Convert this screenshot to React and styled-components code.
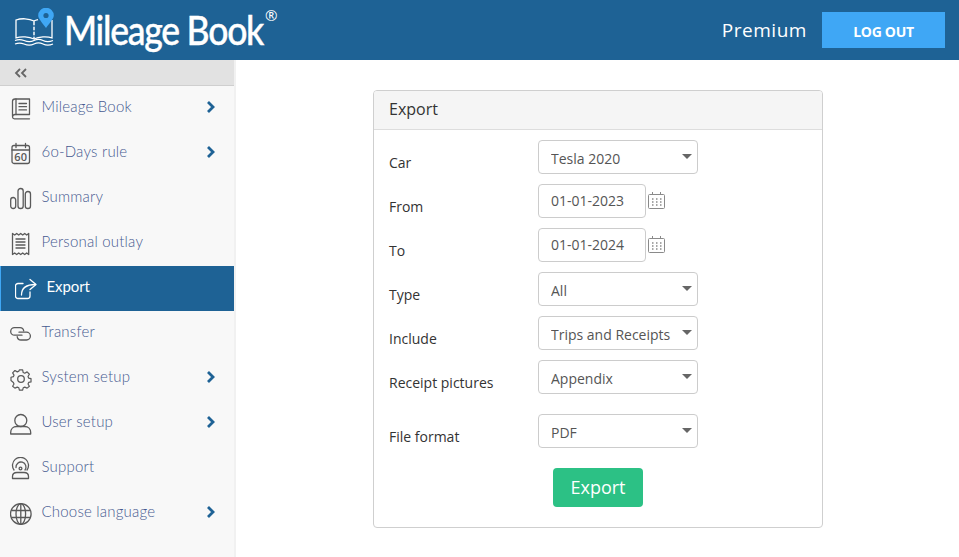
import React from "react";
import styled, { createGlobalStyle } from "styled-components";

const GlobalStyle = createGlobalStyle`
  html, body {
    margin: 0;
    padding: 0;
    height: 100%;
    background: #fff;
    font-family: "Open Sans", "Liberation Sans", sans-serif;
  }
  * { box-sizing: border-box; }
`;

const Page = styled.div`
  width: 959px;
  height: 557px;
  display: flex;
  flex-direction: column;
  overflow: hidden;
`;

const Header = styled.header`
  height: 60px;
  flex: none;
  background: #1e6295;
  display: flex;
  align-items: center;
  justify-content: space-between;
  padding: 0 14px 0 14px;
`;

const Brand = styled.div`
  display: flex;
  align-items: flex-start;
  color: #fff;
`;

const BrandName = styled.span`
  display: inline-block;
  width: 201px;
  margin-left: 8px;
  white-space: nowrap;
  font-family: Lato, sans-serif;
  font-size: 41px;
  line-height: 60px;
  font-weight: 500;
  letter-spacing: -1.45px;
  -webkit-text-stroke: 0.4px #fff;
  transform: scaleX(0.867);
  transform-origin: left center;
`;

const Registered = styled.span`
  font-family: "Open Sans", sans-serif;
  font-size: 15px;
  line-height: 15px;
  margin: 8px 0 0 0;
`;

const Account = styled.div`
  display: flex;
  align-items: center;
  gap: 15px;
`;

const Plan = styled.span`
  color: #fff;
  font-size: 19px;
  letter-spacing: 0.55px;
`;

const LogoutButton = styled.button`
  width: 123px;
  height: 36px;
  border: none;
  background: #3fa7f5;
  color: #fff;
  font-family: "Open Sans", sans-serif;
  font-size: 14px;
  font-weight: 700;
  letter-spacing: -0.3px;
  padding: 2px 0 0;
`;

const Body = styled.div`
  flex: 1;
  display: flex;
  min-height: 0;
`;

const Sidebar = styled.aside`
  width: 236px;
  flex: none;
  background: #f8f8f8;
  border-right: 2px solid #f1f1f1;
  display: flex;
  flex-direction: column;
`;

const CollapseBar = styled.div`
  height: 26px;
  background: #e2e2e2;
  border-bottom: 1px solid #cfcfcf;
  display: flex;
  align-items: center;
  padding-left: 14px;
`;

const NavItem = styled.div`
  height: 45px;
  display: flex;
  align-items: center;
  padding-left: ${(props) => (props.$active ? "14px" : "10px")};
  background: ${(props) => (props.$active ? "#1e6295" : "transparent")};
  border-left: ${(props) => (props.$active ? "1px solid #3fa7f5" : "none")};
  color: ${(props) => (props.$active ? "#fff" : "#465a90")};
  font-family: Lato, sans-serif;
  font-size: 15px;
  font-weight: ${(props) => (props.$active ? 400 : 300)};
  letter-spacing: ${(props) => (props.$active ? "-0.1px" : "0.2px")};
`;

const NavIcon = styled.svg`
  width: 22px;
  height: 24px;
  flex: none;
  fill: none;
  stroke: ${(props) => (props.$active ? "#fff" : "#5a5a5a")};
  stroke-width: 1.3;
  stroke-linecap: round;
  stroke-linejoin: round;
`;

const NavLabel = styled.span`
  margin-left: 9.5px;
  margin-top: -6px;
  flex: 1;
`;

const NavChevron = styled.svg`
  width: 9px;
  height: 12px;
  margin: -4px 19px 0 0;
  fill: none;
  stroke: #1e6295;
  stroke-width: 2.8;
`;

const Main = styled.main`
  flex: 1;
  display: flex;
  justify-content: center;
  align-items: flex-start;
  padding: 30px 0 0 1px;
`;

const Panel = styled.section`
  width: 450px;
  height: 438px;
  border: 1px solid #cfcfcf;
  border-radius: 4px;
  overflow: hidden;
`;

const PanelTitle = styled.h2`
  margin: 0;
  height: 39px;
  padding: 0 15px;
  background: #f5f5f5;
  border-bottom: 1px solid #dddddd;
  color: #333;
  font-size: 16px;
  font-weight: 400;
  line-height: 37px;
`;

const PanelForm = styled.form`
  display: flex;
  flex-direction: column;
  gap: 10px;
  padding: 10px 15px 0;
`;

const Row = styled.div`
  display: flex;
  align-items: center;
  height: 34px;
  margin-top: ${(props) => props.$offset || 0};
`;

const Label = styled.label`
  width: 149px;
  flex: none;
  color: #333;
  font-size: 14px;
  line-height: 20px;
  padding-top: 11px;
`;

const SelectWrap = styled.div`
  position: relative;
  width: 160px;
  height: 34px;
`;

const Select = styled.select`
  width: 100%;
  height: 34px;
  appearance: none;
  border: 1px solid #ccc;
  border-radius: 4px;
  background: #fff;
  color: #555;
  font-family: "Open Sans", sans-serif;
  font-size: 14px;
  padding: 2px 12px 0;
`;

const Caret = styled.span`
  position: absolute;
  top: 14px;
  right: 6px;
  width: 0;
  height: 0;
  border-left: 5px solid transparent;
  border-right: 5px solid transparent;
  border-top: 5.5px solid #666;
  pointer-events: none;
`;

const DateInput = styled.input`
  width: 108px;
  height: 34px;
  border: 1px solid #ccc;
  border-radius: 4px;
  color: #555;
  font-family: "Open Sans", sans-serif;
  font-size: 14px;
  padding: 0 12px 2px;
`;

const CalendarIcon = styled.svg`
  width: 19px;
  height: 19px;
  margin: -2px 0 0 1px;
  fill: none;
  stroke: #8a8a8a;
  stroke-width: 1;
`;

const Actions = styled.div`
  display: flex;
  justify-content: flex-start;
  padding: 10px 0 0 164px;
`;

const ExportButton = styled.button`
  width: 90px;
  height: 39px;
  border: none;
  border-radius: 4px;
  background: #2cc185;
  color: #fff;
  font-family: "Open Sans", sans-serif;
  font-size: 18px;
  padding: 0 0 2px;
`;

const icons = {
  book: (
    <>
      <path d="M2.500 19V4.500a2.500 2.500 0 0 1 2.500-2.500H19.500V17.500H5a2.500 2.500 0 0 0-2.500 2.500A2 2 0 0 0 4.500 21.800H19.500" />
      <path d="M9 6.500h7.500M9 9.700h7.500M9 12.900h7.500" />
      <path d="M6 2v15.500" />
    </>
  ),
  calendar: (
    <>
      <rect x="2" y="3.500" width="17.500" height="18" rx="2" />
      <path d="M2 8h17.500M6 1.500v4M15.500 1.500v4" />
      <text x="10.800" y="18.800" fontSize="11" textAnchor="middle" fontFamily="Open Sans" fontWeight="600" fill="#5a5a5a" stroke="none">60</text>
    </>
  ),
  summary: (
    <>
      <rect x="0.700" y="10.500" width="5" height="11" rx="2.500" />
      <rect x="8" y="1.500" width="5.200" height="20" rx="2.600" />
      <rect x="15.300" y="4.500" width="5.200" height="17" rx="2.600" />
    </>
  ),
  receipt: (
    <>
      <path d="M2.500 1.500l2.200 1.500 2-1.500 2 1.500 2-1.500 2 1.500 2-1.500 2 1.500 2-1.500v21l-2-1.500-2 1.500-2-1.500-2 1.500-2-1.500-2 1.500-2-1.500-2.200 1.500z" />
      <path d="M6 7h9M6 10h9M6 13h9M6 16h9" />
    </>
  ),
  share: (
    <>
      <path d="M8 6.500H3A2.500 2.500 0 0 0 .5 9V19a2.500 2.500 0 0 0 2.500 2.500H12.500A2.500 2.500 0 0 0 15 19v-4" />
      <path d="M6.500 18c0-6.500 4-10.500 14-10.500" />
      <path d="M15 2.500l6 5-6 5" />
    </>
  ),
  link: (
    <>
      <path d="M12 13.200H4.500a3.800 3.800 0 0 1 0-7.600h5.500a3.800 3.800 0 0 1 3.700 3.300" />
      <path d="M9 10.200h7.500a3.900 3.900 0 0 1 0 7.800h-5.500a3.900 3.900 0 0 1-3.800-3.400" />
    </>
  ),
  gear: (
    <>
      <circle cx="11" cy="12" r="3.300" />
      <path d="M9.200 2.500h3.600l.6 2.900 1.700.8 2.600-1.500 2.500 2.600-1.500 2.500.7 1.700 2.600.6v3.600l-2.600.6-.7 1.700 1.500 2.500-2.500 2.100-2.600-1.100-1.700.7-.6 2.600H9.200l-.6-2.600-1.700-.7-2.600 1.100-2.500-2.100 1.500-2.500-.7-1.700L0 14.200v-3.600l2.600-.6.700-1.700-1.500-2.500 2.500-2.600 2.600 1.500 1.700-.8z" transform="translate(1 .6) scale(.91)" />
    </>
  ),
  user: (
    <>
      <circle cx="10.800" cy="8.500" r="6" />
      <path d="M.7 22v-1.500c0-3.500 2.500-6 6-6h8c3.500 0 6 2.500 6 6V22z" />
    </>
  ),
  support: (
    <>
      <path d="M4 13a8 8 0 1 1 13 0" />
      <path d="M6 10.500a5 5 0 1 1 9 2.500" />
      <circle cx="10.500" cy="11.500" r="1.400" />
      <path d="M2.500 21.500V19.500c0-2.500 2-4 4.500-4h7c2.500 0 4.500 1.500 4.500 4v2z" />
    </>
  ),
  globe: (
    <>
      <circle cx="10.800" cy="12" r="10.300" />
      <ellipse cx="10.800" cy="12" rx="4.800" ry="10.300" />
      <path d="M10.800 1.700v20.600M1.800 8.500h18M1.800 15.500h18" />
    </>
  ),
};

const navItems = [
  { label: "Mileage Book", icon: "book", more: true },
  { label: "6o-Days rule", icon: "calendar", more: true },
  { label: "Summary", icon: "summary" },
  { label: "Personal outlay", icon: "receipt" },
  { label: "Export", icon: "share", active: true },
  { label: "Transfer", icon: "link" },
  { label: "System setup", icon: "gear", more: true },
  { label: "User setup", icon: "user", more: true },
  { label: "Support", icon: "support" },
  { label: "Choose language", icon: "globe", more: true },
];

const LogoMark = () => (
  <svg width="42" height="40" viewBox="0 0 42 40" fill="none" style={{ marginTop: 8 }}>
    <path d="M2 12c5-1.800 13-1.800 18 1v18c-5-2.500-13-2.800-18-1.200z" stroke="#fff" strokeWidth="1.300" />
    <path d="M20 13c1-.6 2.500-1.100 4-1.400M38 12v17.800c-5-1.600-13-1.300-18 1.200" stroke="#fff" strokeWidth="1.300" />
    <path d="M20 14v16" stroke="#1e6295" strokeWidth="1.300" />
    <path d="M20 14v16" stroke="#fff" strokeWidth="1.300" strokeDasharray="3 2" />
    <path d="M1 32.500c3-1.300 6-1.300 9 0s7 1.500 10 0 6-1.500 9 0 7 1.300 10 0M1 36c3-1.300 6-1.300 9 0s7 1.500 10 0 6-1.500 9 0 7 1.300 10 0" stroke="#fff" strokeWidth="1.200" />
    <path d="M32 20c-4-5.500-7.800-9.500-7.800-12.500a7.800 7.800 0 0 1 15.600 0C39.800 10.500 36 14.500 32 20z" fill="#3fa7f5" />
    <circle cx="32" cy="7.500" r="2.600" fill="#1e6295" />
  </svg>
);

const SelectField = ({ id, value, options }) => (
  <SelectWrap>
    <Select id={id} defaultValue={value}>
      {options.map((option) => (
        <option key={option}>{option}</option>
      ))}
    </Select>
    <Caret />
  </SelectWrap>
);

const DateField = ({ id, value }) => (
  <>
    <DateInput id={id} defaultValue={value} />
    <CalendarIcon viewBox="0 0 19 19">
      <rect x="1.500" y="3.500" width="16" height="14" rx="1" />
      <path d="M5.500 1v3M13.500 1v3" />
      <path d="M5 8h1.500M9 8h1.500M13 8h1.500M5 11h1.500M9 11h1.500M13 11h1.500M5 14h1.500M9 14h1.500M13 14h1.500" strokeWidth="1.400" />
    </CalendarIcon>
  </>
);

const App = () => {
  return (
    <Page>
      <GlobalStyle />
      <Header>
        <Brand>
          <LogoMark />
          <BrandName>Mileage Book</BrandName>
          <Registered>®</Registered>
        </Brand>
        <Account>
          <Plan>Premium</Plan>
          <LogoutButton>LOG OUT</LogoutButton>
        </Account>
      </Header>
      <Body>
        <Sidebar>
          <CollapseBar>
            <svg width="13" height="10" viewBox="0 0 13 10" fill="none" stroke="#666" strokeWidth="1.800">
              <path d="M6 1L2 5l4 4M12 1L8 5l4 4" />
            </svg>
          </CollapseBar>
          {navItems.map((item) => (
            <NavItem key={item.label} $active={item.active}>
              <NavIcon viewBox="0 0 22 24" $active={item.active}>
                {icons[item.icon]}
              </NavIcon>
              <NavLabel>{item.label}</NavLabel>
              {item.more && (
                <NavChevron viewBox="0 0 9 12">
                  <path d="M2 1l5 5-5 5" />
                </NavChevron>
              )}
            </NavItem>
          ))}
        </Sidebar>
        <Main>
          <Panel>
            <PanelTitle>Export</PanelTitle>
            <PanelForm>
              <Row>
                <Label htmlFor="car">Car</Label>
                <SelectField id="car" value="Tesla 2020" options={["Tesla 2020"]} />
              </Row>
              <Row>
                <Label htmlFor="from">From</Label>
                <DateField id="from" value="01-01-2023" />
              </Row>
              <Row>
                <Label htmlFor="to">To</Label>
                <DateField id="to" value="01-01-2024" />
              </Row>
              <Row>
                <Label htmlFor="type">Type</Label>
                <SelectField id="type" value="All" options={["All"]} />
              </Row>
              <Row>
                <Label htmlFor="include">Include</Label>
                <SelectField id="include" value="Trips and Receipts" options={["Trips and Receipts"]} />
              </Row>
              <Row>
                <Label htmlFor="pictures">Receipt pictures</Label>
                <SelectField id="pictures" value="Appendix" options={["Appendix"]} />
              </Row>
              <Row $offset="10px">
                <Label htmlFor="format">File format</Label>
                <SelectField id="format" value="PDF" options={["PDF"]} />
              </Row>
              <Actions>
                <ExportButton type="button">Export</ExportButton>
              </Actions>
            </PanelForm>
          </Panel>
        </Main>
      </Body>
    </Page>
  );
};

export default App;
